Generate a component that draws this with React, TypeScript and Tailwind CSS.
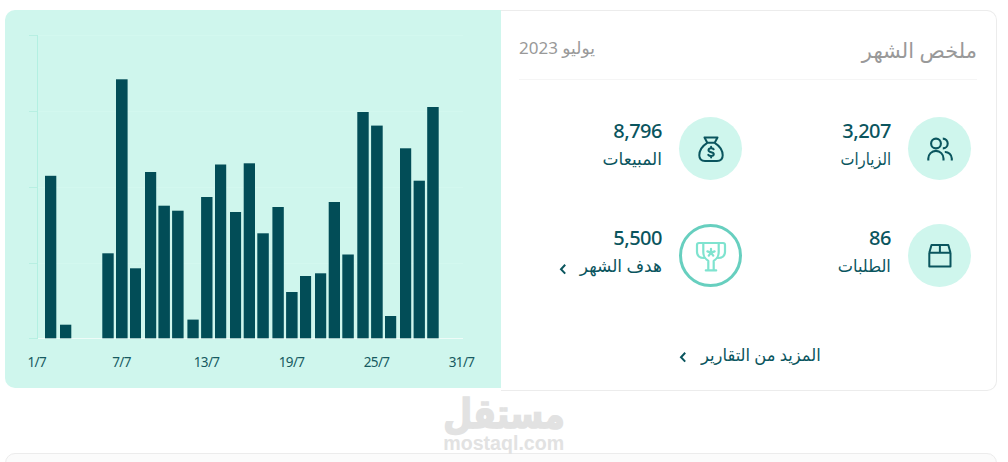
import type { ReactNode } from "react"

const ARABIC = "font-['Noto_Sans','DejaVu_Sans',sans-serif]"

// x, top edge and width of every bar, in chart pixels
const bars = [
  [45, 175.8, 11.3],
  [60, 324.7, 11.3],
  [102.3, 253.3, 11.4],
  [116, 79.3, 11.6],
  [130, 268.3, 11],
  [145, 172, 11.2],
  [158.4, 205.7, 11.5],
  [172.1, 210.7, 11.5],
  [187.4, 319.6, 11.3],
  [201.1, 197, 11.4],
  [215, 164.5, 11.2],
  [230, 212, 11.1],
  [243.7, 163.3, 11.3],
  [257.3, 233.3, 11.5],
  [272.4, 207, 11.4],
  [286.1, 292, 11.5],
  [300, 276, 11.1],
  [315, 273.3, 11.2],
  [328.7, 202, 11.3],
  [342.3, 254.5, 11.5],
  [357.3, 112, 11.4],
  [371.1, 125.6, 11.6],
  [385, 316, 11.2],
  [400, 148.3, 11.2],
  [413.6, 180.7, 11.3],
  [427.2, 107, 11.5],
]

const days = [
  { label: "1/7", x: 36.8 },
  { label: "7/7", x: 121.6 },
  { label: "13/7", x: 206.6 },
  { label: "19/7", x: 291.6 },
  { label: "25/7", x: 376.6 },
  { label: "31/7", x: 461.6 },
]

function SalesChart() {
  return (
    <svg viewBox="5 10 496 378" className="block h-[378px] w-[496px]">
      {[35.5, 111.5, 187.5, 263.5, 338.5].map((y) => (
        <g key={y}>
          <path d={`M29 ${y}H37`} stroke="#b8efe2" />
          <path d={`M38 ${y}H463`} stroke={y > 330 ? "#eefcf8" : "#d3f8ef"} />
        </g>
      ))}
      <path d="M37.5 35V339" stroke="#b3f0e2" />
      {bars.map(([x, y, w]) => (
        <rect key={x} x={x} y={y} width={w} height={338.3 - y} fill="#024d57" />
      ))}
      {days.map((d) => (
        <text
          key={d.label}
          x={d.x}
          y={367}
          textAnchor="middle"
          fill="#175a61"
          className="font-['Noto_Sans',sans-serif] text-[13.5px] tracking-[-0.6px]"
        >
          {d.label}
        </text>
      ))}
    </svg>
  )
}

function UsersIcon() {
  return (
    <svg viewBox="0 0 28 28" className="h-7 w-7" fill="none" stroke="#0a555e" strokeWidth="2.1">
      <circle cx="10" cy="8.5" r="4.9" />
      <path d="M16.8 3.6a4.9 4.9 0 1 1 0 9.8M2.3 25.5v-2a7.6 7.6 0 0 1 15.2 0v2M18.8 17a6.7 6.7 0 0 1 7 6.5v2" />
    </svg>
  )
}

function MoneyBagIcon() {
  return (
    <svg viewBox="0 0 28 28" className="h-7 w-7" fill="none" stroke="#0a555e" strokeWidth="2" strokeLinejoin="round" strokeLinecap="round">
      <path d="M7.5 2.5h13l-2.8 5.3h-7.4zM10.3 7.8C6 10.5 2.3 15 2.3 20.3c0 4 2.3 5.7 5.7 5.7h12c3.4 0 5.7-1.7 5.7-5.7 0-5.3-3.7-9.8-8-12.5" />
      <path d="M16.7 14.3c-.6-.8-1.5-1-2.6-1-1.5 0-2.6.7-2.6 1.9 0 2.8 5.3 1.2 5.3 3.9 0 1.2-1.1 1.9-2.7 1.9-1.2 0-2.2-.4-2.8-1.2M14.1 11.8v1.5M14.1 21v1.5" />
    </svg>
  )
}

function BoxIcon() {
  return (
    <svg viewBox="0 0 28 28" className="h-7 w-7" fill="none" stroke="#0a555e" strokeWidth="2" strokeLinejoin="round">
      <path d="M3.3 10.8h21.2v13.7H3.3zM3.3 10.8l2.2-7.8h16.8l2.2 7.8M13.9 3v7.8" />
    </svg>
  )
}

function TrophyIcon() {
  return (
    <svg viewBox="0 0 32 32" className="h-8 w-8" fill="none" stroke="#7fe3cf" strokeWidth="2.2" strokeLinejoin="round" strokeLinecap="round">
      <path d="M8.3 3h15.4v9c0 4.2-1 6-5 8.8v9.4M8.3 3v9c0 4.2 1 6 5 8.8v9.4M10.8 30.4h10.4" />
      <path d="M8.3 3H4C2.5 3 2 3.8 2 5v7c0 3.5 2.6 6 7.2 6M23.7 3H28c1.5 0 2 .8 2 2v7c0 3.5-2.6 6-7.2 6" />
      <path d="M16 8.8v3.8M16 12.6l-3.6-1.2M16 12.6l3.6-1.2M16 12.6l-2.2 3M16 12.6l2.2 3" />
    </svg>
  )
}

function Chevron() {
  return (
    <svg viewBox="0 0 8 12" className="mt-[11px] h-3 w-2" fill="none" stroke="#0a555e" strokeWidth="2">
      <path d="M6.2 1.8 2 6.2l4.2 4.4" />
    </svg>
  )
}

function Stat({ icon, value, label, goal }: { icon: ReactNode; value: string; label: ReactNode; goal?: boolean }) {
  return (
    <div className="flex h-[63px] gap-[17px]">
      <div
        className={
          goal
            ? "flex size-[63px] shrink-0 items-center justify-center rounded-full border-[3.5px] border-[#67cfbf]"
            : "flex size-[63px] shrink-0 items-center justify-center rounded-full bg-[#cff6ed]"
        }
      >
        {icon}
      </div>
      <div className="text-[#0a555e]">
        <div className="h-7 font-['Noto_Sans',sans-serif] text-[20px] leading-[28px] font-medium tracking-[-0.5px]">{value}</div>
        <div className="flex h-7 leading-[28px] whitespace-nowrap">{label}</div>
      </div>
    </div>
  )
}

export default function App() {
  return (
    <div dir="rtl" className={`h-[462px] overflow-hidden bg-white pt-[10px] ${ARABIC}`}>
      <section className="mr-[11px] ml-[5px] flex h-[381px] items-start">
        <div className="h-[381px] w-[496px] rounded-r-[10px] border border-l-0 border-[#ececec] pr-[19px] pl-[18px]">
          <header className="flex h-[69px] items-start justify-between border-b border-[#f5f5f5] pt-[22px] text-[#999]">
            <h2 className="text-[21px] leading-[34px] whitespace-nowrap">ملخص الشهر</h2>
            <p className="text-[17px] leading-[30px] whitespace-nowrap">يوليو 2023</p>
          </header>
          <div className="mt-[37px] mr-[6px] grid grid-cols-[229px_1fr] gap-y-11">
            <Stat
              icon={<UsersIcon />}
              value="3,207"
              label={<span className="origin-right scale-x-[.87] text-[17px]">الزيارات</span>}
            />
            <Stat
              icon={<MoneyBagIcon />}
              value="8,796"
              label={<span className="origin-right text-[17px]">المبيعات</span>}
            />
            <Stat
              icon={<BoxIcon />}
              value="86"
              label={<span className="origin-right scale-x-[.95] text-[17px]">الطلبات</span>}
            />
            <Stat
              goal
              icon={<TrophyIcon />}
              value="5,500"
              label={
                <span className="flex gap-[13px] text-[17px]">
                  هدف الشهر <Chevron />
                </span>
              }
            />
          </div>
          <a href="#" className="mt-[53px] mr-[156px] flex w-max gap-[15px] text-[#0a555e]">
            <span className="-ml-[6px] origin-right scale-x-[.96] text-[17px] leading-[30px]">المزيد من التقارير</span> <Chevron />
          </a>
        </div>
        <div className="h-[378px] w-[496px] overflow-hidden rounded-l-[10px] bg-[#cff6ed]" dir="ltr">
          <SalesChart />
        </div>
      </section>

      <footer className="mx-auto flex h-[62px] w-[120px] flex-col items-center text-[#e2e2e2]">
        <span className="mt-[3px] h-[38px] scale-x-[.95] scale-y-[1.15] text-[35px] leading-[38px] font-bold [-webkit-text-stroke:1.5px_#e2e2e2]">
          مستقل
        </span>
        <span dir="ltr" className="mt-px h-5 scale-x-[.98] font-['Liberation_Sans',sans-serif] text-[20px] leading-5 font-bold">
          mostaql.com
        </span>
      </footer>
      <div className="mr-[11px] ml-[5px] h-5 rounded-t-[10px] border border-[#ececec] bg-[#fbfbfb]" />
    </div>
  )
}
